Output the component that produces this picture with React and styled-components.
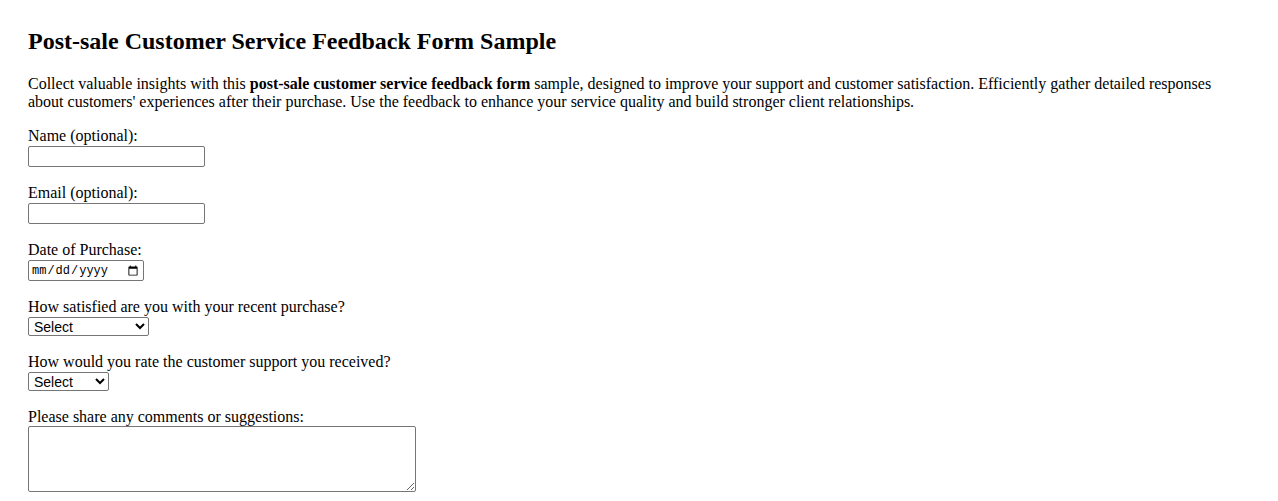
import React from "react";
import styled, { createGlobalStyle } from "styled-components";

const GlobalStyle = createGlobalStyle`
  body {
    margin: 0;
    background: #fff;
    color: #000;
    font-family: "Liberation Serif", "Times New Roman", serif;
  }
`;

const Page = styled.main`
  padding: 27px 28px 0;
  font-size: 16px;
  line-height: 18px;
`;

const Title = styled.h2`
  margin: 0 0 20px;
  font-size: 24px;
  line-height: 28px;
  font-weight: bold;
`;

const Intro = styled.p`
  margin: 0 0 16px;
`;

const Form = styled.form`
  display: flex;
  flex-direction: column;
  align-items: flex-start;
`;

const Field = styled.div`
  display: flex;
  flex-direction: column;
  align-items: flex-start;
  margin-bottom: 17px;

  &:last-child {
    margin-bottom: 0;
  }
`;

const Label = styled.label`
  display: block;
  line-height: 18px;
`;

const TextInput = styled.input`
  box-sizing: border-box;
  margin: 1px 0 0;
  width: 177px;
  height: 21px;
  padding: 1px 2px;
  border: 1px solid #767676;
  border-radius: 2px;
  font: 13.33px "Liberation Sans", Arial, sans-serif;
`;

const DateInput = styled(TextInput)`
  width: 116px;
  font-family: "Liberation Mono", "Courier New", monospace;
  font-size: 12px;
`;

const Select = styled.select`
  box-sizing: border-box;
  margin: 1px 0 0;
  width: ${(p) => p.$width}px;
  height: 19px;
  padding: 0 0 0 1px;
  border: 1px solid #767676;
  border-radius: 2px;
  background: #fff;
  color: #000;
  font-family: "Liberation Sans", Arial, sans-serif;
  font-size: 14px;
`;

const TextArea = styled.textarea`
  box-sizing: border-box;
  margin: 0;
  width: 388px;
  height: 66px;
  padding: 2px;
  border: 1px solid #767676;
  border-radius: 2px;
  font: 13.33px "Liberation Mono", monospace;
`;

export default function App() {
  return (
    <>
      <GlobalStyle />
      <Page>
        <Title>Post-sale Customer Service Feedback Form Sample</Title>
        <Intro>
          Collect valuable insights with this{" "}
          <strong>post-sale customer service feedback form</strong> sample,
          designed to improve your support and customer satisfaction.
          Efficiently gather detailed responses about customers' experiences
          after their purchase. Use the feedback to enhance your service
          quality and build stronger client relationships.
        </Intro>
        <Form onSubmit={(e) => e.preventDefault()}>
          <Field>
            <Label htmlFor="name">Name (optional):</Label>
            <TextInput type="text" id="name" name="name" />
          </Field>
          <Field>
            <Label htmlFor="email">Email (optional):</Label>
            <TextInput type="email" id="email" name="email" />
          </Field>
          <Field>
            <Label htmlFor="purchaseDate">Date of Purchase:</Label>
            <DateInput type="date" id="purchaseDate" name="purchaseDate" />
          </Field>
          <Field>
            <Label htmlFor="satisfaction">
              How satisfied are you with your recent purchase?
            </Label>
            <Select id="satisfaction" name="satisfaction" $width={121}>
              <option value="">Select</option>
              <option>Very Satisfied</option>
              <option>Satisfied</option>
              <option>Neutral</option>
              <option>Dissatisfied</option>
              <option>Very Dissatisfied</option>
            </Select>
          </Field>
          <Field>
            <Label htmlFor="support">
              How would you rate the customer support you received?
            </Label>
            <Select id="support" name="support" $width={81}>
              <option value="">Select</option>
              <option>Excellent</option>
              <option>Good</option>
              <option>Average</option>
              <option>Poor</option>
            </Select>
          </Field>
          <Field>
            <Label htmlFor="comments">
              Please share any comments or suggestions:
            </Label>
            <TextArea id="comments" name="comments" />
          </Field>
        </Form>
      </Page>
    </>
  );
}
